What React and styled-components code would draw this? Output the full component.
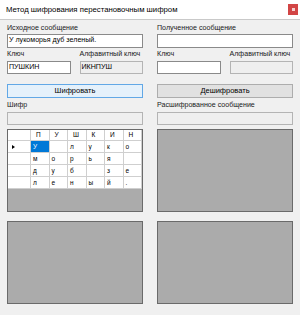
import styled, { createGlobalStyle } from 'styled-components';

const GlobalStyle = createGlobalStyle`
  body {
    margin: 0;
    font-family: "Liberation Sans", Arial, sans-serif;
  }
`;

const Window = styled.div`
  width: 300px;
  height: 315px;
  box-sizing: border-box;
  background: #f0f0f0;
  display: flex;
  flex-direction: column;
  overflow: hidden;
`;

const TitleBar = styled.div`
  height: 20px;
  box-sizing: border-box;
  background: #fff;
  border-bottom: 1px solid #c9c9c9;
  display: flex;
  align-items: center;
  justify-content: space-between;
  padding: 0 2px 0 6px;
  font-size: 7.75px;
  color: #000;
`;

const CloseButton = styled.div`
  width: 10px;
  height: 11px;
  background: #d24545;
  align-self: flex-start;
  margin-top: 4px;
  display: flex;
  align-items: center;
  justify-content: center;
  &::after {
    content: '';
    width: 3px;
    height: 3px;
    background: #f4d0d0;
  }
`;

const Body = styled.div`
  display: grid;
  grid-template-columns: 136px 136px;
  column-gap: 14px;
  padding: 3px 7px 0 7px;
`;

const Column = styled.div`
  display: flex;
  flex-direction: column;
`;

const Label = styled.div`
  font-size: 7.1px;
  line-height: 10px;
  height: 10px;
  color: #1a1a1a;
  white-space: nowrap;
  margin-top: ${(p) => p.$top || 0}px;
`;

const Field = styled.div`
  height: ${(p) => p.$h || 13}px;
  box-sizing: border-box;
  margin-top: ${(p) => p.$top || 0}px;
  background: ${(p) => (p.$readonly ? '#efefef' : '#fff')};
  border: 1px solid ${(p) => (p.$readonly ? '#b4b4b4' : '#8a8a8a')};
  font-size: 7.1px;
  line-height: 11px;
  padding-left: 1px;
  color: #000;
  white-space: nowrap;
  overflow: hidden;
`;

const KeyRow = styled.div`
  display: grid;
  grid-template-columns: 1fr 1fr;
  column-gap: 9px;
`;

const KeyCell = styled.div`
  display: flex;
  flex-direction: column;
`;

const Button = styled.div`
  margin-top: 10px;
  height: 14px;
  box-sizing: border-box;
  background: ${(p) => (p.$active ? '#e5f1fb' : '#e1e1e1')};
  border: 1px solid ${(p) => (p.$active ? '#62a8e6' : '#adadad')};
  font-size: 7.5px;
  line-height: 12px;
  text-align: center;
  color: #000;
`;

const Panel = styled.div`
  margin-top: ${(p) => p.$top}px;
  height: 83px;
  box-sizing: border-box;
  background: #ababab;
  border: 1px solid #6a6a6a;
  overflow: hidden;
`;

const GridTable = styled.div`
  display: grid;
  grid-template-columns: 23px repeat(6, 1fr);
`;

const Cell = styled.div`
  height: ${(p) => (p.$header ? 11 : 12)}px;
  box-sizing: border-box;
  background: ${(p) => (p.$selected ? '#0078d7' : '#fff')};
  color: ${(p) => (p.$selected ? '#fff' : '#000')};
  border-right: 1px solid #cfcfcf;
  border-bottom: 1px solid #cfcfcf;
  font-size: 6.5px;
  line-height: ${(p) => (p.$header ? 10 : 11)}px;
  padding-left: ${(p) => (p.$header ? 5 : 2)}px;
  display: flex;
  align-items: center;
`;

const RowArrow = styled.span`
  width: 0;
  height: 0;
  margin-left: 2px;
  border-left: 3px solid #000;
  border-top: 2.5px solid transparent;
  border-bottom: 2.5px solid transparent;
`;

const keyLetters = ['П', 'У', 'Ш', 'К', 'И', 'Н'];
const rows = [
  ['У', '', 'л', 'у', 'к', 'о'],
  ['м', 'о', 'р', 'ь', 'я', ''],
  ['д', 'у', 'б', '', 'з', 'е'],
  ['л', 'е', 'н', 'ы', 'й', '.'],
];

function CipherGrid() {
  return (
    <GridTable>
      <Cell $header />
      {keyLetters.map((k) => (
        <Cell $header key={k}>{k}</Cell>
      ))}
      {rows.map((row, r) => [
        <Cell key={`h${r}`}>{r === 0 && <RowArrow />}</Cell>,
        ...row.map((ch, c) => (
          <Cell key={`${r}-${c}`} $selected={r === 0 && c === 0}>{ch}</Cell>
        )),
      ])}
    </GridTable>
  );
}

export default function App() {
  return (
    <>
      <GlobalStyle />
      <Window>
        <TitleBar>
          <span>Метод шифрования перестановочным шифром</span>
          <CloseButton />
        </TitleBar>
        <Body>
          <Column>
            <Label>Исходное сообщение</Label>
            <Field $top={1} $h={14}>У лукоморья дуб зеленый.</Field>
            <KeyRow>
              <KeyCell>
                <Label $top={1}>Ключ</Label>
                <Field $top={2}>ПУШКИН</Field>
              </KeyCell>
              <KeyCell>
                <Label $top={1}>Алфавитный ключ</Label>
                <Field $top={2} $readonly>ИКНПУШ</Field>
              </KeyCell>
            </KeyRow>
            <Button $active>Шифровать</Button>
            <Label $top={2}>Шифр</Label>
            <Field $top={2} $readonly />
            <Panel $top={4}>
              <CipherGrid />
            </Panel>
            <Panel $top={9} />
          </Column>
          <Column>
            <Label>Полученное сообщение</Label>
            <Field $top={1} $h={14} />
            <KeyRow>
              <KeyCell>
                <Label $top={1}>Ключ</Label>
                <Field $top={2} />
              </KeyCell>
              <KeyCell>
                <Label $top={1}>Алфавитный ключ</Label>
                <Field $top={2} $readonly />
              </KeyCell>
            </KeyRow>
            <Button>Дешифровать</Button>
            <Label $top={2}>Расшифрованное сообщение</Label>
            <Field $top={2} $readonly />
            <Panel $top={4} />
            <Panel $top={9} />
          </Column>
        </Body>
      </Window>
    </>
  );
}
